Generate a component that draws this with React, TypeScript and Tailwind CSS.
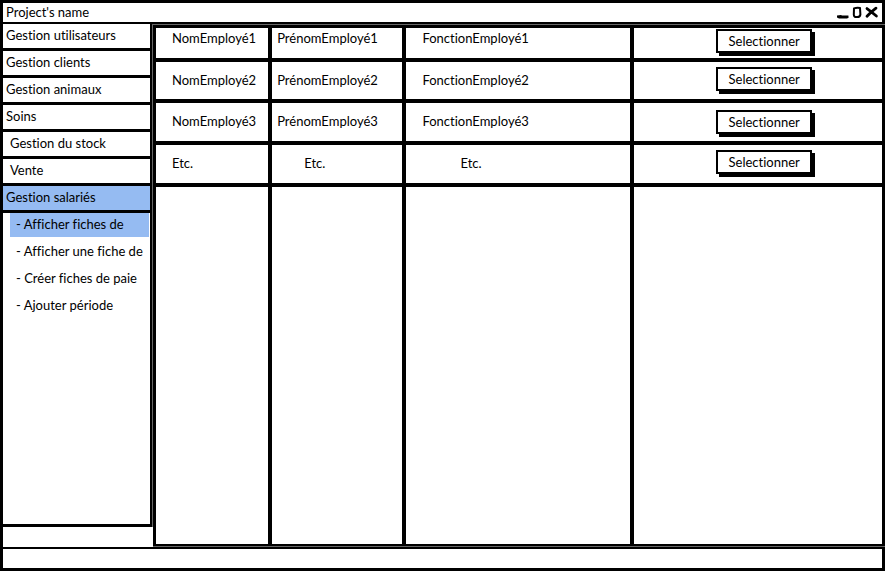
const menu = [
  { label: "Gestion utilisateurs", pad: "pl-[3px]" },
  { label: "Gestion clients", pad: "pl-[3px]" },
  { label: "Gestion animaux", pad: "pl-[3px]" },
  { label: "Soins", pad: "pl-[3px]" },
  { label: "Gestion du stock", pad: "pl-[7px]" },
  { label: "Vente", pad: "pl-[7px]" },
];

const subMenu = [
  "- Afficher fiches de",
  "- Afficher une fiche de",
  "- Créer fiches de paie",
  "- Ajouter période",
];

const rows = [
  {
    cells: ["NomEmployé1", "PrénomEmployé1", "FonctionEmployé1"],
    height: "h-[34px] align-top",
    pads: ["pl-4", "pl-[5px]", "pl-4"],
    action: "pl-3 pt-px",
  },
  {
    cells: ["NomEmployé2", "PrénomEmployé2", "FonctionEmployé2"],
    height: "h-[41px]",
    pads: ["pl-4 pb-[2px]", "pl-[5px] pb-[2px]", "pl-4 pb-[2px]"],
    action: "pl-3 pb-[3px]",
  },
  {
    cells: ["NomEmployé3", "PrénomEmployé3", "FonctionEmployé3"],
    height: "h-[42px]",
    pads: ["pl-4 pb-[2px]", "pl-[5px] pb-[2px]", "pl-4 pb-[2px]"],
    action: "pl-3",
  },
  {
    cells: ["Etc.", "Etc.", "Etc."],
    height: "h-[42px]",
    pads: ["pl-4 pb-[2px]", "pl-8 pb-[2px]", "pl-[54px] pb-[2px]"],
    action: "pl-3 pb-1",
  },
];

function TitleBar() {
  return (
    <header className="flex h-6 items-center justify-between border-x-[3px] border-t-[3px] border-b-2 border-black pr-[3px] pb-px pl-[3px]">
      <h1>Project's name</h1>
      <div className="flex items-center gap-[2px]">
        <button type="button" aria-label="Réduire">
          <svg width="14" height="14" viewBox="0 0 14 14">
            <path d="M1 10.5 L5 10 L6 10.6 L12.4 10.6 L12.6 12.8 L11 13.4 L3 13.4 L1 12.4 Z" fill="#000" />
          </svg>
        </button>
        <button type="button" aria-label="Agrandir">
          <svg width="10" height="14" viewBox="0 0 10 14">
            <path d="M2 3.4 Q5 2.2 8 3 L8.4 9.5 Q8 12.2 5 12 Q1.8 12.4 1.8 9.6 Z" stroke="#000" strokeWidth="2" strokeLinejoin="round" fill="none" />
          </svg>
        </button>
        <button type="button" aria-label="Fermer">
          <svg width="15" height="14" viewBox="0 0 15 14">
            <path d="M3 3.6 Q7 6.5 12.4 11 M12 3.2 Q7 7 3 11.2" stroke="#000" strokeWidth="2.8" strokeLinecap="round" fill="none" />
          </svg>
        </button>
      </div>
    </header>
  );
}

function Sidebar() {
  return (
    <div className="w-[153px] shrink-0 border-l-[3px] border-black pb-5">
      <nav className="mr-px h-full border-r-2 border-b-[3px] border-black shadow-[1px_0_0_0_#666]">
        {menu.map((item) => (
          <a key={item.label} href="#" className={`flex h-[27px] items-center border-b-[3px] border-black pb-[2px] ${item.pad}`}>
            {item.label}
          </a>
        ))}
        <a href="#" aria-current="true" className="flex h-[27px] items-center border-b-[3px] border-black bg-[#95bbf2] pb-[2px] pl-[3px]">
          Gestion salariés
        </a>
        <ul className="pr-px pl-[7px]">
          {subMenu.map((label, i) => (
            <li key={label} className={i === 0 ? "bg-[#95bbf2]" : ""}>
              <a href="#" className="mb-[3px] flex h-6 items-center pb-[2px] pl-[6px] whitespace-nowrap">
                {label}
              </a>
            </li>
          ))}
        </ul>
      </nav>
    </div>
  );
}

function EmployeeTable() {
  return (
    <div className="flex min-w-0 flex-1 border-y border-[#666]">
      <table className="min-w-0 flex-1 table-fixed border-separate border-spacing-0 border-x-[3px] border-t-[3px] border-b-2 border-black">
        <colgroup>
          <col className="w-[16%]" />
          <col className="w-[18.5%]" />
          <col className="w-[31.4%]" />
          <col />
        </colgroup>
        <tbody>
          {rows.map((row) => (
            <tr key={row.cells[0]} className={row.height}>
              {row.cells.map((cell, i) => (
                <td key={i} className={`border-r-4 border-b-4 border-black ${row.pads[i]}`}>
                  {cell}
                </td>
              ))}
              <td className={`border-b-4 border-black text-center ${row.action}`}>
                <button type="button" className="mx-auto block h-6 w-24 border-2 border-black bg-white leading-4 shadow-[3px_3px_0_0_#000]">
                  Selectionner
                </button>
              </td>
            </tr>
          ))}
          <tr>
            <td className="border-r-4 border-black" />
            <td className="border-r-4 border-black" />
            <td className="border-r-4 border-black" />
            <td />
          </tr>
        </tbody>
      </table>
    </div>
  );
}

export default function App() {
  return (
    <div className="flex min-h-screen flex-col bg-white pr-[9px] pb-px font-['Lato',sans-serif] text-[13px] leading-5 text-black [font-variant-ligatures:none]">
      <TitleBar />
      <main className="flex flex-1">
        <Sidebar />
        <EmployeeTable />
      </main>
      <footer className="h-6 border-x-[3px] border-t-2 border-b-[3px] border-black" />
    </div>
  );
}
